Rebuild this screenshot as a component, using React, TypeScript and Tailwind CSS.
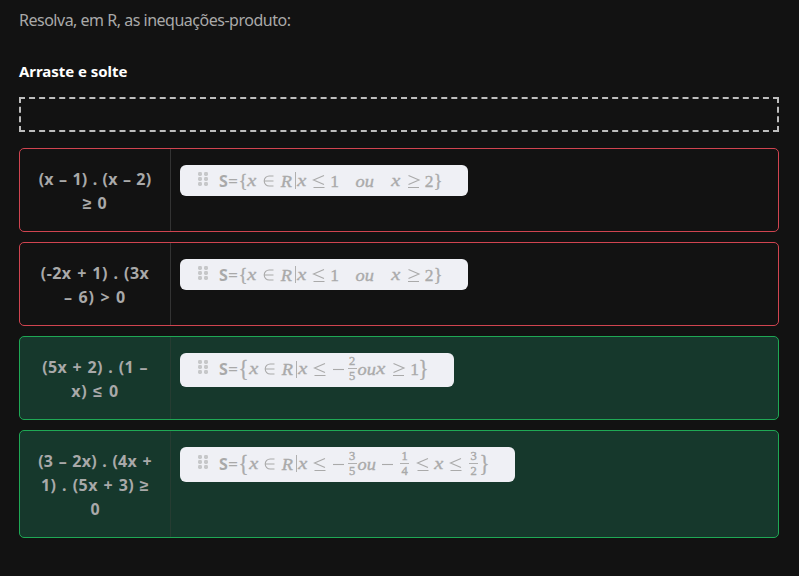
type Token = { t?: string; w: number; frac?: [string, string]; kind?: 'it' | 'rel' | 'brace' | 'bigbrace' | 'bar' };
type Row = { lines: { text: string; spacing: number }[]; ok: boolean; pill: string; height: string; math: Token[] };

const simple: Token[] = [
  { t: '{', w: 8, kind: 'brace' },
  { t: 'x', w: 10, kind: 'it' },
  { t: '∈', w: 22, kind: 'rel' },
  { t: 'R', w: 14, kind: 'it' },
  { t: '|', w: 4, kind: 'bar' },
  { t: 'x', w: 10, kind: 'it' },
  { t: '≤', w: 22, kind: 'rel' },
  { t: '1', w: 11 },
  { t: 'ou', w: 50, kind: 'it' },
  { t: 'x', w: 12, kind: 'it' },
  { t: '≥', w: 22, kind: 'rel' },
  { t: '2', w: 10 },
  { t: '}', w: 8, kind: 'brace' },
];

const opening: Token[] = [
  { t: '{', w: 9, kind: 'bigbrace' },
  { t: 'x', w: 11, kind: 'it' },
  { t: '∈', w: 21, kind: 'rel' },
  { t: 'R', w: 14, kind: 'it' },
  { t: '|', w: 4, kind: 'bar' },
  { t: 'x', w: 10, kind: 'it' },
  { t: '≤', w: 23, kind: 'rel' },
  { t: '−', w: 15, kind: 'rel' },
];

const rows: Row[] = [
  {
    lines: [{ text: '(x – 1) . (x – 2)', spacing: 0.15 }, { text: '≥ 0', spacing: 0.4 }],
    ok: false, pill: 'w-[288px] h-[31px]', height: 'h-[84px]', math: simple,
  },
  {
    lines: [{ text: '(-2x + 1) . (3x', spacing: 0.45 }, { text: '– 6) > 0', spacing: 0.7 }],
    ok: false, pill: 'w-[288px] h-[31px]', height: 'h-[84px]', math: simple,
  },
  {
    lines: [{ text: '(5x + 2) . (1 –', spacing: 0.35 }, { text: 'x) ≤ 0', spacing: 0.8 }],
    ok: true, pill: 'w-[274px] h-[34px]', height: 'h-[84px]',
    math: [
      ...opening,
      { frac: ['2', '5'], w: 12 },
      { t: 'ou', w: 18, kind: 'it' },
      { t: 'x', w: 10, kind: 'it' },
      { t: '≥', w: 24, kind: 'rel' },
      { t: '1', w: 9 },
      { t: '}', w: 10, kind: 'bigbrace' },
    ],
  },
  {
    lines: [{ text: '(3 – 2x) . (4x +', spacing: 0.25 }, { text: '1) . (5x + 3) ≥', spacing: 0.45 }, { text: '0', spacing: 0 }],
    ok: true, pill: 'w-[335px] h-[35px]', height: 'h-[108px]',
    math: [
      ...opening,
      { frac: ['3', '5'], w: 12 },
      { t: 'ou', w: 18, kind: 'it' },
      { t: '−', w: 23, kind: 'rel' },
      { frac: ['1', '4'], w: 11 },
      { t: '≤', w: 24, kind: 'rel' },
      { t: 'x', w: 10, kind: 'it' },
      { t: '≤', w: 23, kind: 'rel' },
      { frac: ['3', '2'], w: 13 },
      { t: '}', w: 10, kind: 'bigbrace' },
    ],
  },
];

const symbolPaths: Record<string, string> = {
  '∈': 'M12.5 4H8.2a5 5 0 0 0 0 10h4.3M3.2 9h9.3',
  '≤': 'M13 3.5 2.5 8l10.5 4.5M2.5 15.5h11',
  '≥': 'M2.5 3.5 13 8 2.5 12.5M2 15.5h11',
  '−': 'M2 9.5h11',
};

function Glyph({ token }: { token: Token }) {
  if (token.frac) {
    return (
      <span className="flex flex-col items-center text-[12.5px] leading-[11px] [-webkit-text-stroke:0.4px_#aaaaaa]">
        <span className="h-[11px]">{token.frac[0]}</span>
        <span className="my-[1px] h-px w-[9px] bg-[#b0b0b0]" />
        <span className="h-[12px] leading-[13px]">{token.frac[1]}</span>
      </span>
    );
  }
  if (token.kind === 'rel') {
    return (
      <svg width="15" height="18" viewBox="0 0 15 18" className="shrink-0" fill="none" stroke="currentColor" strokeWidth="1.1">
        <path d={symbolPaths[token.t!]} />
      </svg>
    );
  }
  if (token.kind === 'bar') return <span className="h-[17px] w-px bg-[#b0b0b0]" />;
  if (token.kind === 'brace') return <span className="text-[18px] leading-[18px]">{token.t}</span>;
  if (token.kind === 'bigbrace') return <span className="scale-x-90 text-[23px] leading-[20px]">{token.t}</span>;
  if (token.kind === 'it') {
    return <span className={'leading-[18px] italic ' + (token.t === 'x' ? 'scale-x-120 text-[17px]' : 'scale-x-105 text-[17.5px]')}>{token.t}</span>;
  }
  return <span className="text-[17.5px] leading-[18px]">{token.t}</span>;
}

function Grip() {
  return (
    <svg width="11" height="14" viewBox="0 0 11 14" className="shrink-0 fill-[#c6c7c9]">
      {[0, 5, 10].map((y) => (
        <g key={y}>
          <rect x="0" y={y} width="4" height="4" rx="1.4" />
          <rect x="6" y={y} width="4" height="4" rx="1.4" />
        </g>
      ))}
    </svg>
  );
}

export default function App() {
  return (
    <main className="h-[576px] w-[799px] overflow-hidden bg-[#121212] pr-5 pl-[19px] font-['Noto_Sans',sans-serif] text-[#a9a9a9]">
      <p className="pt-2 text-[16px] leading-6 tracking-[-0.49px] whitespace-nowrap">Resolva, em R, as inequações-produto:</p>
      <h2 className="mt-[27px] text-[15px] leading-6 font-bold tracking-[-0.05px] whitespace-nowrap text-white">Arraste e solte</h2>
      <div className="mt-[14px] h-[35px] border-2 border-dashed border-[#bdbdbd]" />
      <div className="mt-4 flex flex-col gap-2.5">
        {rows.map((row, i) => (
          <section
            key={i}
            className={'flex rounded-[5px] border ' + row.height + ' ' + (row.ok ? 'border-[#1fa855] bg-[#16382c]' : 'border-[#d04450]')}
          >
            <div className={'w-[151px] shrink-0 border-r pt-[18px] text-center text-[16px] leading-6 font-bold whitespace-nowrap [word-spacing:1px] ' + (row.ok ? 'border-[#263c32]' : 'border-[#333333]')}>
              {row.lines.map((line) => (
                <div key={line.text} style={{ letterSpacing: line.spacing }}>{line.text}</div>
              ))}
            </div>
            <div className="pt-4 pl-[9px]">
              <div className={'flex items-center rounded-[6px] bg-[#eff0f5] pl-[18px] ' + row.pill + (row.ok ? ' pb-0.5' : '')}>
                <span className="pb-1"><Grip /></span>
                <span className="ml-[10px] flex w-5 text-[16px] leading-5">
                  <b className="w-[9px]">S</b><span className="origin-left scale-x-110">=</span>
                </span>
                <span className="flex items-center font-['Liberation_Serif',serif] text-[#aaaaaa] [-webkit-text-stroke:0.35px_#aaaaaa]">
                  {row.math.map((token, j) => (
                    <span key={j} className="flex shrink-0 items-center justify-center" style={{ width: token.w }}>
                      <Glyph token={token} />
                    </span>
                  ))}
                </span>
              </div>
            </div>
          </section>
        ))}
      </div>
    </main>
  );
}
